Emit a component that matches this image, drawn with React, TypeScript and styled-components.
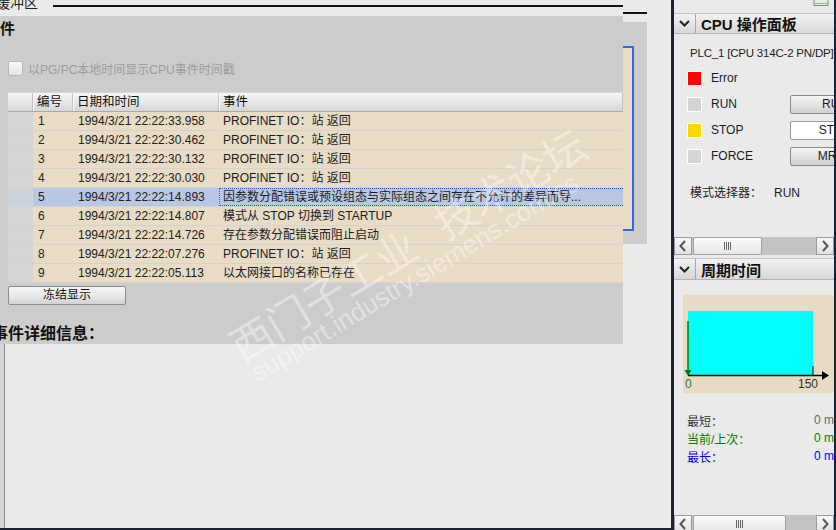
import styled, { createGlobalStyle } from 'styled-components';

const GlobalStyle = createGlobalStyle`
  html, body {
    margin: 0;
    padding: 0;
    background: #eaeaea;
    overflow: hidden;
  }
  body {
    font-family: "Liberation Sans", "Noto Sans CJK SC", sans-serif;
    font-size: 12px;
    color: #1e1e1e;
  }
`;

type EventRow = { no: number; time: string; text: string };

const events: EventRow[] = [
  { no: 1, time: '1994/3/21 22:22:33.958', text: 'PROFINET IO：站 返回' },
  { no: 2, time: '1994/3/21 22:22:30.462', text: 'PROFINET IO：站 返回' },
  { no: 3, time: '1994/3/21 22:22:30.132', text: 'PROFINET IO：站 返回' },
  { no: 4, time: '1994/3/21 22:22:30.030', text: 'PROFINET IO：站 返回' },
  {
    no: 5,
    time: '1994/3/21 22:22:14.893',
    text: '因参数分配错误或预设组态与实际组态之间存在不允许的差异而导...',
  },
  { no: 6, time: '1994/3/21 22:22:14.807', text: '模式从 STOP 切换到 STARTUP' },
  { no: 7, time: '1994/3/21 22:22:14.726', text: '存在参数分配错误而阻止启动' },
  { no: 8, time: '1994/3/21 22:22:07.276', text: 'PROFINET IO：站 返回' },
  { no: 9, time: '1994/3/21 22:22:05.113', text: '以太网接口的名称已存在' },
];

const SELECTED = 5;

const leds = [
  { label: 'Error', color: '#ff0000', button: null as null | 'raised' | 'flat', caption: '' },
  { label: 'RUN', color: '#d4d4d4', button: 'raised' as const, caption: 'RUN' },
  { label: 'STOP', color: '#ffd700', button: 'flat' as const, caption: 'STOP' },
  { label: 'FORCE', color: '#d4d4d4', button: 'raised' as const, caption: 'MRES' },
];

const Chevron = () => (
  <svg width="11" height="7" viewBox="0 0 11 7">
    <path d="M1 1 L5.5 5.5 L10 1" fill="none" stroke="#222" strokeWidth="2" />
  </svg>
);

const ArrowIcon = ({ dir }: { dir: 'left' | 'right' }) => (
  <svg width="8" height="12" viewBox="0 0 8 12">
    <path
      d={dir === 'left' ? 'M6 1 L1.5 6 L6 11' : 'M2 1 L6.5 6 L2 11'}
      fill="none"
      stroke="#555"
      strokeWidth="2"
    />
  </svg>
);

const ScrollBar = ({ thumb }: { thumb: number }) => (
  <HScroll>
    <ScrollBtn>
      <ArrowIcon dir="left" />
    </ScrollBtn>
    <ScrollThumb style={{ width: thumb }}>
      <Grip />
    </ScrollThumb>
    <ScrollTrough />
    <ScrollBtn>
      <ArrowIcon dir="right" />
    </ScrollBtn>
  </HScroll>
);

const App = () => {
  return (
    <Screen>
      <GlobalStyle />
      <LeftArea>
        <MainCol>
          <TopStrip>
            <TopCaption>缓冲区</TopCaption>
            <TopRule />
          </TopStrip>
          <GrayPanel>
            <SectionTitle>事件</SectionTitle>
            <CheckRow>
              <CheckBox />
              <CheckLabel>以PG/PC本地时间显示CPU事件时间戳</CheckLabel>
            </CheckRow>
            <Table>
              <HeaderRow>
                <RowHead $header />
                <HeadCell $w={40}>编号</HeadCell>
                <HeadCell $w={146}>日期和时间</HeadCell>
                <HeadCell $w={0}>事件</HeadCell>
              </HeaderRow>
              {events.map((e) => {
                const sel = e.no === SELECTED;
                return (
                  <BodyRow key={e.no} $selected={sel}>
                    <RowHead $selected={sel} />
                    <Cell $w={40}>{e.no}</Cell>
                    <Cell $w={146}>{e.time}</Cell>
                    <EventCell $focused={sel}>{e.text}</EventCell>
                  </BodyRow>
                );
              })}
            </Table>
            <FreezeButton>冻结显示</FreezeButton>
            <DetailTitle>事件详细信息：</DetailTitle>
          </GrayPanel>
          <DetailArea>
            <DetailInner />
          </DetailArea>
        </MainCol>
        <GhostCol>
          <GhostRule />
          <GhostBlock>
            <GhostFrame />
          </GhostBlock>
        </GhostCol>
      </LeftArea>
      <Divider />
      <RightPanel>
        <RightTop>
          <svg width="16" height="7" viewBox="0 0 16 7">
            <path d="M1 0 V5.5 H15 V0" fill="none" stroke="#6a86c8" strokeWidth="1" />
            <path d="M1 3.5 H15" stroke="#9fb2dc" strokeWidth="1" />
          </svg>
        </RightTop>
        <PanelHeader $h={19}>
          <ChevronBox>
            <Chevron />
          </ChevronBox>
          <PanelTitle>CPU 操作面板</PanelTitle>
        </PanelHeader>
        <CpuBody>
          <PlcName>PLC_1 [CPU 314C-2 PN/DP]</PlcName>
          {leds.map((l) => (
            <LedRow key={l.label}>
              <Led $color={l.color} />
              <LedLabel>{l.label}</LedLabel>
              {l.button && <ModeButton $flat={l.button === 'flat'}>{l.caption}</ModeButton>}
            </LedRow>
          ))}
          <ModeRow>
            <ModeLabel>模式选择器：</ModeLabel>
            <span>RUN</span>
          </ModeRow>
        </CpuBody>
        <ScrollBar thumb={69} />
        <Gap />
        <PanelHeader $h={20}>
          <ChevronBox>
            <Chevron />
          </ChevronBox>
          <PanelTitle>周期时间</PanelTitle>
        </PanelHeader>
        <CycleBody>
          <ChartBox>
            <svg width="153" height="98" viewBox="0 0 153 98">
              <rect x="5" y="16" width="125" height="64" fill="#00ffff" />
              <line x1="5" y1="26" x2="5" y2="78" stroke="#008000" strokeWidth="1.5" />
              <polygon points="1.5,75 8.5,75 5,81" fill="#008000" />
              <line x1="5" y1="80.5" x2="140" y2="80.5" stroke="#000" strokeWidth="1.5" />
              <line x1="130" y1="71" x2="130" y2="80" stroke="#000" strokeWidth="1" />
              <polygon points="139,76 146,80.5 139,85" fill="#000" />
              <text x="2" y="93" fontSize="12" fill="#2c7a3c" fontFamily="Liberation Sans, sans-serif">
                0
              </text>
              <text x="115" y="93" fontSize="12" fill="#3a2c18" fontFamily="Liberation Sans, sans-serif">
                150
              </text>
            </svg>
          </ChartBox>
          <Stats>
            <StatRow $color="#333">
              <StatLabel>最短：</StatLabel>
              <StatValue $color="#666">0 ms</StatValue>
            </StatRow>
            <StatRow $color="#008000">
              <StatLabel>当前/上次：</StatLabel>
              <StatValue $color="#008000">0 ms</StatValue>
            </StatRow>
            <StatRow $color="#0000ff">
              <StatLabel>最长：</StatLabel>
              <StatValue $color="#0000ff">0 ms</StatValue>
            </StatRow>
          </Stats>
        </CycleBody>
        <ScrollBar thumb={93} />
      </RightPanel>
      <Watermark>
        <MarkLine>
          西门子工业<MarkGap />技术论坛
        </MarkLine>
        <MarkUrl>support.industry.siemens.com/cs</MarkUrl>
      </Watermark>
    </Screen>
  );
};

export default App;

const Screen = styled.div`
  position: relative;
  width: 836px;
  height: 530px;
  display: flex;
  overflow: hidden;
  background: #eaeaea;
`;

const LeftArea = styled.div`
  width: 671px;
  height: 530px;
  display: flex;
  border-bottom: 2px solid #1b2231;
  box-sizing: border-box;
`;

const MainCol = styled.div`
  width: 623px;
  display: flex;
  flex-direction: column;
`;

const TopStrip = styled.div`
  height: 16px;
  flex-shrink: 0;
  display: flex;
  overflow: hidden;
`;

const TopCaption = styled.div`
  margin-top: -5px;
  margin-left: -4px;
  font-size: 14px;
  line-height: 16px;
  color: #222;
`;

const TopRule = styled.div`
  flex: 1;
  height: 2px;
  margin: 5px 0 0 15px;
  background: #111;
`;

const GrayPanel = styled.div`
  height: 328px;
  flex-shrink: 0;
  background: #cccccc;
  display: flex;
  flex-direction: column;
  overflow: hidden;
`;

const SectionTitle = styled.div`
  height: 26px;
  line-height: 26px;
  margin-left: -15px;
  font-size: 15px;
  font-weight: bold;
  color: #111;
`;

const CheckRow = styled.div`
  margin-top: 19px;
  height: 15px;
  display: flex;
  align-items: center;
  gap: 5px;
  padding-left: 8px;
`;

const CheckBox = styled.div`
  width: 13px;
  height: 13px;
  border: 1px solid #b9b9b9;
  border-radius: 2px;
  background: linear-gradient(#fafafa, #e4e4e4);
`;

const CheckLabel = styled.span`
  color: #9c9c9c;
  font-size: 12px;
`;

const Table = styled.div`
  margin: 16px 0 0 8px;
  display: flex;
  flex-direction: column;
`;

const HeaderRow = styled.div`
  height: 18px;
  display: flex;
  background: linear-gradient(#f6f6f6, #e4e4e4 60%, #d6d6d6);
  border-top: 1px solid #d8d8d8;
  border-bottom: 1px solid #a9a9a9;
  box-sizing: content-box;
`;

const RowHead = styled.div<{ $header?: boolean; $selected?: boolean }>`
  width: 24px;
  flex-shrink: 0;
  border-right: 1px solid ${(p) => (p.$header ? '#c0c0c0' : '#d4d4d4')};
  background: ${(p) =>
    p.$header ? 'transparent' : p.$selected ? '#c9d1d9' : '#d4d4d4'};
`;

const HeadCell = styled.div<{ $w: number }>`
  ${(p) => (p.$w ? `width: ${p.$w}px; flex-shrink: 0;` : 'flex: 1;')}
  padding-left: 4px;
  box-sizing: border-box;
  line-height: 18px;
  font-size: 12.5px;
  color: #111;
  border-right: 1px solid #c4c4c4;
  box-shadow: inset 1px 0 0 #fafafa;
`;

const BodyRow = styled.div<{ $selected?: boolean }>`
  height: 18px;
  display: flex;
  background: ${(p) => (p.$selected ? '#b8c7e3' : '#e8dcc5')};
  border-bottom: 1px solid #d3d3d3;
`;

const Cell = styled.div<{ $w: number }>`
  width: ${(p) => p.$w}px;
  flex-shrink: 0;
  padding-left: 5px;
  box-sizing: border-box;
  line-height: 18px;
  color: #24201a;
  white-space: nowrap;
`;

const EventCell = styled.div<{ $focused?: boolean }>`
  flex: 1;
  padding-left: 3px;
  line-height: 16px;
  white-space: nowrap;
  overflow: hidden;
  color: #1c1a22;
  border: 1px dotted ${(p) => (p.$focused ? '#2f5fd0' : 'transparent')};
  border-right: none;
`;

const FreezeButton = styled.div`
  margin: 3px 0 0 8px;
  width: 118px;
  height: 19px;
  box-sizing: border-box;
  border: 1px solid #8c8c8c;
  border-radius: 2px;
  background: linear-gradient(#f6f6f6, #e6e6e6 55%, #d2d2d2);
  text-align: center;
  line-height: 17px;
  font-size: 12px;
  color: #111;
`;

const DetailTitle = styled.div`
  margin: 19px 0 0 -8px;
  height: 20px;
  line-height: 20px;
  font-size: 16px;
  font-weight: bold;
  color: #111;
  white-space: nowrap;
`;

const DetailArea = styled.div`
  flex: 1;
  border-left: 4px solid #d8d8d8;
  background: #eaeaea;
`;

const DetailInner = styled.div`
  height: 100%;
  border-left: 1px solid #8f8f8f;
`;

const GhostCol = styled.div`
  width: 24px;
  display: flex;
  flex-direction: column;
`;

const GhostRule = styled.div`
  margin-top: 12px;
  height: 2px;
  background: #111;
`;

const GhostBlock = styled.div`
  margin-top: 8px;
  height: 222px;
  background: #cccccc;
  padding-top: 24px;
  box-sizing: border-box;
`;

const GhostFrame = styled.div`
  width: 11px;
  height: 185px;
  box-sizing: border-box;
  background: #e8dcc5;
  border: 2px solid #2f6ae0;
  border-left: none;
`;

const Divider = styled.div`
  width: 3px;
  background: #1b2231;
`;

const RightPanel = styled.div`
  width: 160px;
  height: 530px;
  display: flex;
  flex-direction: column;
  overflow: hidden;
  border-right: 2px solid #1b2231;
  background: #eaeaea;
`;

const RightTop = styled.div`
  height: 13px;
  flex-shrink: 0;
  display: flex;
  justify-content: flex-end;
  align-items: flex-start;
  padding-right: 5px;
`;

const PanelHeader = styled.div<{ $h: number }>`
  height: ${(p) => p.$h}px;
  flex-shrink: 0;
  display: flex;
  align-items: stretch;
  background: linear-gradient(#f2f2f2, #e2e2e2 60%, #d8d8d8);
  border-top: 1px solid #c4c4c4;
  border-bottom: 1px solid #b4b4b4;
`;

const ChevronBox = styled.div`
  width: 21px;
  display: flex;
  align-items: center;
  justify-content: center;
  border-right: 1px solid #a8a8a8;
`;

const PanelTitle = styled.div`
  padding-left: 5px;
  display: flex;
  align-items: center;
  font-size: 15px;
  font-weight: bold;
  color: #111;
  white-space: nowrap;
`;

const CpuBody = styled.div`
  height: 203px;
  flex-shrink: 0;
  display: flex;
  flex-direction: column;
  padding-top: 12px;
  box-sizing: border-box;
`;

const PlcName = styled.div`
  padding-left: 16px;
  margin-bottom: 5px;
  line-height: 14px;
  font-size: 11.5px;
  letter-spacing: -0.2px;
  color: #1c1c1c;
  white-space: nowrap;
`;

const LedRow = styled.div`
  height: 26px;
  flex-shrink: 0;
  display: flex;
  align-items: center;
  padding-left: 13px;
`;

const Led = styled.div<{ $color: string }>`
  width: 15px;
  height: 15px;
  flex-shrink: 0;
  box-sizing: border-box;
  border: 1px solid #fff;
  background: ${(p) => p.$color};
`;

const LedLabel = styled.div`
  width: 79px;
  flex-shrink: 0;
  margin-left: 9px;
  font-size: 12px;
  color: #1a1a2a;
`;

const ModeButton = styled.div<{ $flat?: boolean }>`
  width: 90px;
  height: 19px;
  flex-shrink: 0;
  box-sizing: border-box;
  border: 1px solid ${(p) => (p.$flat ? '#9a9a9a' : '#8a8a8a')};
  border-radius: 2px;
  background: ${(p) => (p.$flat ? '#ffffff' : 'linear-gradient(#f4f4f4, #e2e2e2 55%, #cfcfcf)')};
  text-align: center;
  line-height: 17px;
  font-size: 12px;
  color: #1a1a2a;
`;

const ModeRow = styled.div`
  margin-top: 17px;
  padding-left: 16px;
  display: flex;
  line-height: 14px;
  font-size: 12px;
  color: #1c1c1c;
`;

const ModeLabel = styled.span`
  width: 84px;
`;

const HScroll = styled.div`
  height: 18px;
  flex-shrink: 0;
  display: flex;
  background: #c3c3c3;
`;

const ScrollBtn = styled.div`
  width: 18px;
  height: 18px;
  box-sizing: border-box;
  border: 1px solid #9a9a9a;
  background: linear-gradient(#f8f8f8, #e2e2e2);
  display: flex;
  align-items: center;
  justify-content: center;
`;

const ScrollThumb = styled.div`
  margin-left: 1px;
  height: 18px;
  box-sizing: border-box;
  border: 1px solid #a2a2a2;
  border-radius: 2px;
  background: linear-gradient(#fbfbfb, #e6e6e6);
  display: flex;
  align-items: center;
  justify-content: center;
`;

const Grip = styled.div`
  width: 7px;
  height: 8px;
  background: repeating-linear-gradient(90deg, #666 0 1px, transparent 1px 2px);
`;

const ScrollTrough = styled.div`
  flex: 1;
`;

const Gap = styled.div`
  height: 3px;
  flex-shrink: 0;
`;

const CycleBody = styled.div`
  height: 235px;
  flex-shrink: 0;
  display: flex;
  flex-direction: column;
  padding-top: 15px;
  box-sizing: border-box;
`;

const ChartBox = styled.div`
  margin-left: 9px;
  height: 98px;
  flex-shrink: 0;
  background: #e8dbc4;
  overflow: hidden;
`;

const Stats = styled.div`
  margin-top: 18px;
  display: flex;
  flex-direction: column;
  padding-left: 13px;
`;

const StatRow = styled.div<{ $color: string }>`
  height: 18px;
  display: flex;
  align-items: center;
  color: ${(p) => p.$color};
  font-size: 12px;
  white-space: nowrap;
`;

const StatLabel = styled.span`
  width: 127px;
  flex-shrink: 0;
`;

const StatValue = styled.span<{ $color: string }>`
  color: ${(p) => p.$color};
`;

const Watermark = styled.div`
  position: absolute;
  left: 222px;
  top: 330px;
  transform: rotate(-31deg);
  transform-origin: 0 0;
  pointer-events: none;
  white-space: nowrap;
  color: rgba(255, 255, 255, 0.42);
`;

const MarkLine = styled.div`
  font-family: "Noto Sans CJK SC", sans-serif;
  font-size: 42px;
  line-height: 42px;
  display: flex;
`;

const MarkGap = styled.span`
  width: 28px;
`;

const MarkUrl = styled.div`
  margin: -1px 0 0 4px;
  font-family: "Liberation Sans", sans-serif;
  font-size: 26px;
  line-height: 26px;
`;
